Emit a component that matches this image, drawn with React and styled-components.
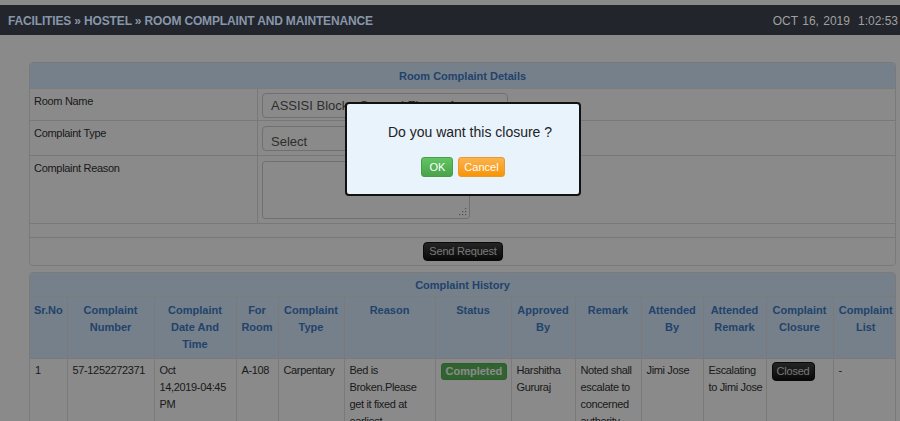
import React from "react";
import styled, { createGlobalStyle } from "styled-components";

const Global = createGlobalStyle`
  html, body { margin: 0; padding: 0; background: #ffffff; overflow: hidden; }
  body { font-family: "Liberation Sans", Tahoma, Arial, sans-serif; color: #333; }
  * { box-sizing: border-box; }
`;

const Page = styled.div`
  position: relative;
  width: 900px;
  height: 421px;
  padding-top: 5px;
  overflow: hidden;
`;

const TopBar = styled.div`
  position: relative;
  z-index: 20;
  height: 30px;
  background: #22252b;
  display: flex;
  align-items: center;
  justify-content: space-between;
  padding: 1px 2px 0 8px;
  white-space: nowrap;
`;

const Crumb = styled.div`
  font-weight: bold;
  font-size: 12px;
  letter-spacing: -0.15px;
  color: #8896aa;
`;

const Clock = styled.div`
  font-size: 12px;
  color: #a0a0a0;
  word-spacing: 1px;
  & span { margin-left: 8px; }
`;

const Content = styled.div`
  padding: 27px 4px 0 29px;
  display: flex;
  flex-direction: column;
  gap: 6px;
`;

const Panel = styled.div`
  border: 1px solid #e2e2e2;
  border-radius: 4px;
  overflow: hidden;
  background: #fff;
`;

const PanelTitle = styled.div`
  height: ${(p) => p.$h}px;
  background: #dbedff;
  color: #3d7cc8;
  font-weight: bold;
  font-size: 11px;
  display: flex;
  align-items: center;
  justify-content: center;
  border-bottom: 1px solid #e6e6e6;
`;

const FormRow = styled.div`
  display: grid;
  grid-template-columns: 228px 1fr;
  height: ${(p) => p.$h}px;
  border-bottom: 1px solid #dedede;
`;

const Label = styled.div`
  font-size: 11px;
  letter-spacing: -0.3px;
  color: #333;
  padding: 6px 4px;
  border-right: 1px solid #dedede;
`;

const Field = styled.div`
  padding: ${(p) => p.$top}px 4px 0;
`;

const SelectBox = styled.div`
  width: 246px;
  height: 25px;
  border: 1px solid #cfcfcf;
  border-radius: 4px;
  background: #fff;
  font-size: 13px;
  color: #555;
  padding: 0 8px;
  display: flex;
  align-items: ${(p) => (p.$bottom ? "flex-end" : "center")};
  padding-bottom: ${(p) => (p.$bottom ? "1px" : "0")};
  white-space: nowrap;
  overflow: hidden;
`;

const TextArea = styled.div`
  position: relative;
  width: 208px;
  height: 58px;
  border: 1px solid #cfcfcf;
  border-radius: 3px;
  background: #fff;
`;

const Grip = styled.svg`
  position: absolute;
  right: 2px;
  bottom: 2px;
`;

const Spacer = styled.div`
  height: 14px;
  border-bottom: 1px solid #dedede;
`;

const ButtonRow = styled.div`
  height: 27px;
  display: flex;
  justify-content: center;
  align-items: center;
  padding-left: 1px;
`;

const DarkButton = styled.div`
  background: linear-gradient(#444, #111);
  color: #ddd;
  font-size: ${(p) => p.$fs || 11}px;
  letter-spacing: -0.2px;
  border-radius: 4px;
  padding: ${(p) => p.$pad};
  line-height: 1;
  display: inline-block;
  border: 1px solid #111;
`;

const Table = styled.table`
  width: 100%;
  border-collapse: collapse;
  table-layout: fixed;
  font-size: 11px;
`;

const Th = styled.th`
  background: #dbedff;
  color: #3d7cc8;
  font-weight: bold;
  font-size: 11px;
  line-height: 17px;
  vertical-align: top;
  padding: 5px 3px 5px;
  text-align: center;
  border-left: 1px solid #e2e2e2;
  &:first-child { border-left: none; }
`;

const Td = styled.td`
  vertical-align: top;
  line-height: 17px;
  letter-spacing: -0.35px;
  padding: 3px 2px 0 5px;
  color: #333;
  border-left: 1px solid #e2e2e2;
  border-top: 1px solid #e2e2e2;
  height: 70px;
  word-wrap: break-word;
  &:first-child { border-left: none; }
`;

const NoWrap = styled.span`
  white-space: nowrap;
`;

const Badge = styled.span`
  display: inline-block;
  background: #5cb85c;
  color: #fff;
  font-weight: bold;
  font-size: 11px;
  letter-spacing: 0;
  line-height: 13px;
  padding: 1px 4px;
  border-radius: 3px;
  border: 1px solid #4fae4f;
  margin-top: 1px;
`;

const Overlay = styled.div`
  position: absolute;
  inset: 0;
  background: rgba(0, 0, 0, 0.46);
  z-index: 10;
`;

const Dialog = styled.div`
  position: absolute;
  left: 345px;
  top: 102px;
  width: 236px;
  height: 94px;
  z-index: 30;
  background: #e8f3fc;
  border: 2px solid #111;
  border-radius: 4px;
  display: flex;
  flex-direction: column;
  align-items: center;
  padding-top: 20px;
`;

const Question = styled.div`
  font-size: 14px;
  color: #222;
  padding-left: 14px;
`;

const Actions = styled.div`
  display: flex;
  gap: 5px;
  margin-top: 17px;
  padding-left: 0;
`;

const DlgButton = styled.div`
  height: 20px;
  padding: 0 ${(p) => p.$px}px;
  font-size: 11px;
  color: #fff;
  border-radius: 3px;
  display: flex;
  align-items: center;
  background: ${(p) =>
    p.$kind === "ok"
      ? "linear-gradient(#62c462, #4aa34a)"
      : "linear-gradient(#fbb450, #f89406)"};
  border: 1px solid ${(p) => (p.$kind === "ok" ? "#4a9e4a" : "#e89a2c")};
`;

const cols = [37, 87, 82, 42, 66, 91, 76, 64, 66, 62, 63, 67, 65];
const heads = [
  "Sr.No",
  "Complaint Number",
  "Complaint Date And Time",
  "For Room",
  "Complaint Type",
  "Reason",
  "Status",
  "Approved By",
  "Remark",
  "Attended By",
  "Attended Remark",
  "Complaint Closure",
  "Complaint List",
];

export default function App() {
  return (
    <>
      <Global />
      <Page>
        <TopBar>
          <Crumb>FACILITIES » HOSTEL » ROOM COMPLAINT AND MAINTENANCE</Crumb>
          <Clock>
            OCT 16, 2019<span>1:02:53</span>
          </Clock>
        </TopBar>
        <Content>
          <Panel>
            <PanelTitle $h={26}>Room Complaint Details</PanelTitle>
            <FormRow $h={32}>
              <Label>Room Name</Label>
              <Field $top={4}>
                <SelectBox>ASSISI Block - Second Floor - A</SelectBox>
              </Field>
            </FormRow>
            <FormRow $h={35}>
              <Label>Complaint Type</Label>
              <Field $top={5}>
                <SelectBox $bottom>Select</SelectBox>
              </Field>
            </FormRow>
            <FormRow $h={68}>
              <Label>Complaint Reason</Label>
              <Field $top={5}>
                <TextArea>
                  <Grip width="8" height="8" viewBox="0 0 8 8">
                    <g fill="#999">
                      <rect x="6" y="0" width="1.2" height="1.2" />
                      <rect x="3" y="3" width="1.2" height="1.2" />
                      <rect x="6" y="3" width="1.2" height="1.2" />
                      <rect x="0" y="6" width="1.2" height="1.2" />
                      <rect x="3" y="6" width="1.2" height="1.2" />
                      <rect x="6" y="6" width="1.2" height="1.2" />
                    </g>
                  </Grip>
                </TextArea>
              </Field>
            </FormRow>
            <Spacer />
            <ButtonRow>
              <DarkButton $fs={11} $pad="3px 5px">Send Request</DarkButton>
            </ButtonRow>
          </Panel>
          <Panel>
            <PanelTitle $h={24}>Complaint History</PanelTitle>
            <Table>
              <colgroup>
                {cols.map((w, i) => (
                  <col key={i} style={{ width: w }} />
                ))}
              </colgroup>
              <thead>
                <tr>
                  {heads.map((h) => (
                    <Th key={h}>{h}</Th>
                  ))}
                </tr>
              </thead>
              <tbody>
                <tr>
                  <Td>1</Td>
                  <Td>57-1252272371</Td>
                  <Td>
                    Oct <NoWrap>14,2019-04:45</NoWrap> PM
                  </Td>
                  <Td>A-108</Td>
                  <Td>Carpentary</Td>
                  <Td>Bed is Broken.Please get it fixed at earliest</Td>
                  <Td>
                    <Badge>Completed</Badge>
                  </Td>
                  <Td>Harshitha Gururaj</Td>
                  <Td>Noted shall escalate to concerned authority</Td>
                  <Td>Jimi Jose</Td>
                  <Td>Escalating to Jimi Jose</Td>
                  <Td>
                    <DarkButton $fs={11} $pad="3px 4px">Closed</DarkButton>
                  </Td>
                  <Td>-</Td>
                </tr>
              </tbody>
            </Table>
          </Panel>
        </Content>
        <Overlay />
        <Dialog>
          <Question>Do you want this closure ?</Question>
          <Actions>
            <DlgButton $kind="ok" $px={7}>OK</DlgButton>
            <DlgButton $kind="cancel" $px={5}>Cancel</DlgButton>
          </Actions>
        </Dialog>
      </Page>
    </>
  );
}
